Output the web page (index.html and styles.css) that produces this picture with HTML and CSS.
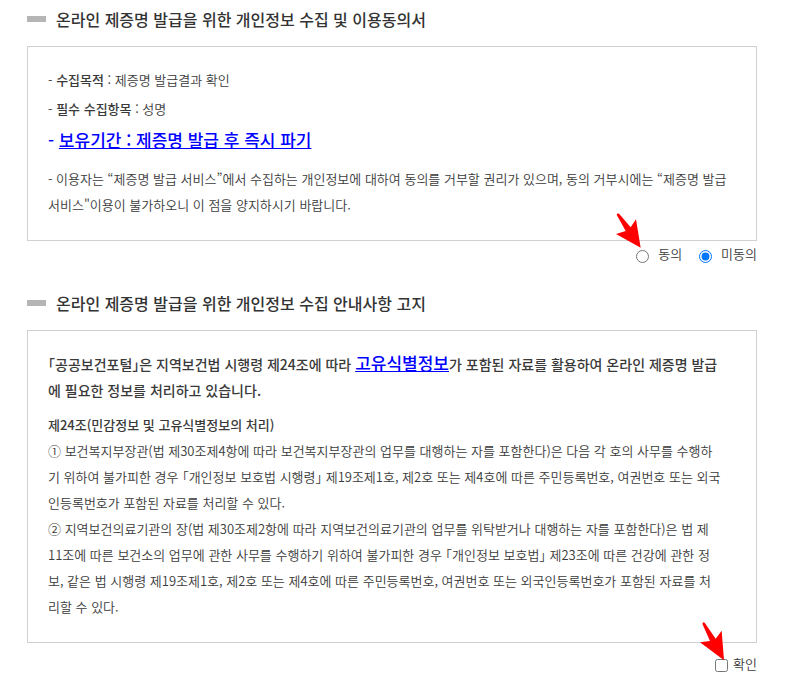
FILE: index.html
```html
<!DOCTYPE html>
<html lang="ko">

<head>
    <meta charset="UTF-8">
    <meta name="viewport" content="width=device-width, initial-scale=1.0">
    <title>온라인 제증명 발급 동의</title>
    <link rel="stylesheet" href="styles.css">
</head>

<body>
    <form class="container">
        <!-- 개인정보 수집 및 이용동의서 -->
        <section class="agree-section">
            <h2 class="title">온라인 제증명 발급을 위한 개인정보 수집 및 이용동의서</h2>
            <div class="agree-box">
                <p class="item">- <strong>수집목적</strong> : 제증명 발급결과 확인</p>
                <p class="item">- <strong>필수 수집항목</strong> : 성명</p>
                <p class="period">- <a href="#">보유기간 : 제증명 발급 후 즉시 파기</a></p>
                <p>- 이용자는 “제증명 발급 서비스”에서 수집하는 개인정보에 대하여 동의를 거부할 권리가 있으며, 동의 거부시에는 “제증명 발급 서비스"이용이 불가하오니 이 점을 양지하시기 바랍니다.</p>
            </div>
            <div class="choices">
                <span class="choice">
                    <input type="radio" id="agree-yes" name="agree" value="Y">
                    <label for="agree-yes">동의</label>
                    <svg class="arrow" width="25" height="35" viewBox="75 24 75 105" aria-hidden="true">
                        <path fill="#f00" d="M80 25 L77 29 L104 78 L75 87 L149 128 L135 43 L119 67 L85 27 Z" />
                    </svg>
                </span>
                <span class="choice">
                    <input type="radio" id="agree-no" name="agree" value="N" checked>
                    <label for="agree-no">미동의</label>
                </span>
            </div>
        </section>

        <!-- 개인정보 수집 안내사항 고지 -->
        <section class="agree-section">
            <h2 class="title">온라인 제증명 발급을 위한 개인정보 수집 안내사항 고지</h2>
            <div class="agree-box">
                <p class="lead">「공공보건포털」은 지역보건법 시행령 제24조에 따라 <a href="#">고유식별정보</a>가 포함된 자료를 활용하여 온라인 제증명 발급<br>에 필요한 정보를 처리하고 있습니다.</p>
                <h3 class="law-title">제24조(민감정보 및 고유식별정보의 처리)</h3>
                <p>① 보건복지부장관(법 제30조제4항에 따라 보건복지부장관의 업무를 대행하는 자를 포함한다)은 다음 각 호의 사무를 수행하<br>기 위하여 불가피한 경우 「개인정보 보호법 시행령」 제19조제1호, 제2호 또는 제4호에 따른 주민등록번호, 여권번호 또는 외국<br>인등록번호가 포함된 자료를 처리할 수 있다.</p>
                <p>② 지역보건의료기관의 장(법 제30조제2항에 따라 지역보건의료기관의 업무를 위탁받거나 대행하는 자를 포함한다)은 법 제<br>11조에 따른 보건소의 업무에 관한 사무를 수행하기 위하여 불가피한 경우 「개인정보 보호법」 제23조에 따른 건강에 관한 정<br>보, 같은 법 시행령 제19조제1호, 제2호 또는 제4호에 따른 주민등록번호, 여권번호 또는 외국인등록번호가 포함된 자료를 처<br>리할 수 있다.</p>
            </div>
            <div class="choices confirm">
                <span class="choice">
                    <input type="checkbox" id="confirm" name="confirm">
                    <label for="confirm">확인</label>
                    <svg class="arrow" width="24" height="39" viewBox="87 37 72 117" aria-hidden="true">
                        <path fill="#f00" d="M97 38 L94 42 L117 94 L87 98 L159 152 L152 63 L134 87 L101 39 Z" />
                    </svg>
                </span>
            </div>
        </section>
    </form>
</body>

</html>
```

FILE: styles.css
```css
body {
    margin: 0;
    background: #fff;
    color: #3a3a3a;
    font-family: "Noto Sans CJK KR", sans-serif;
    font-size: 13px;
    font-weight: 350;
    line-height: 26px;
}

.container {
    padding: 6px 28px 0 27px;
}

.title {
    display: flex;
    align-items: center;
    gap: 10px;
    margin: 0 0 14px;
    color: #333;
    font-size: 16px;
    font-weight: 500;
}

.title::before {
    content: "";
    width: 19px;
    height: 6px;
    background: #b5b5b5;
}

/* halt: half-width corner brackets */
.agree-box {
    padding: 20px 20px 22px;
    border: 1px solid #d0d0d0;
    font-feature-settings: "halt";
}

.agree-box p {
    margin: 0;
}

.agree-box .item {
    margin-bottom: 3px;
}

.agree-box strong {
    font-weight: 500;
}

.agree-box a {
    color: #00f;
    font-size: 17px;
    font-weight: 500;
    line-height: 1;
}

.agree-box .period {
    margin: 5px 0 13px;
    color: #00f;
    font-size: 17px;
    font-weight: 500;
}

.agree-box .lead {
    margin-bottom: 9px;
    font-size: 14px;
    font-weight: 500;
}

.law-title {
    margin: 0;
    font-size: 13px;
    font-weight: 500;
}

.choices {
    display: flex;
    justify-content: flex-end;
    gap: 17px;
    margin-bottom: 23px;
}

.choice {
    position: relative;
    display: flex;
    align-items: center;
    gap: 9px;
}

.choice input {
    width: 13px;
    height: 13px;
    margin: 4px 0 0;
}

.confirm {
    margin-top: 8px;
}

.confirm .choice {
    gap: 5px;
}

.confirm input {
    margin-top: 2px;
}

/* red pointer, its tip lies on the top of the control */
.arrow {
    position: absolute;
    right: 100%;
    bottom: 19px;
    margin-right: -5px;
}

.confirm .arrow {
    bottom: 16px;
    margin-right: -9px;
}
```
